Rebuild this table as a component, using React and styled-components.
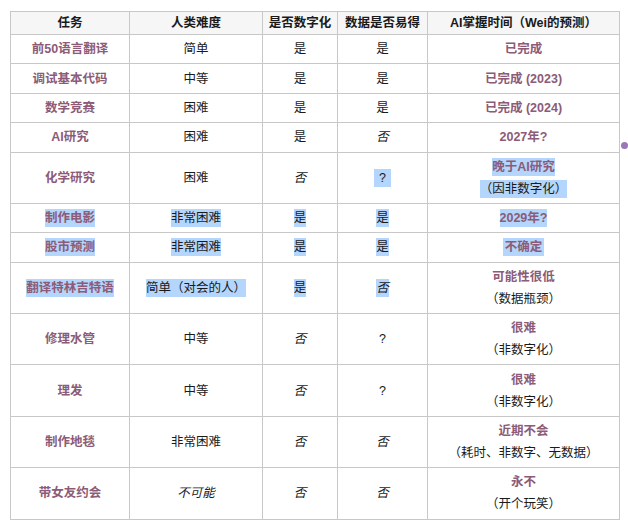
import React from "react";
import styled, { createGlobalStyle } from "styled-components";

const Global = createGlobalStyle`
  html, body { margin: 0; padding: 0; background: #ffffff; }
  body {
    font-family: "Liberation Sans", "Noto Sans CJK SC", sans-serif;
    font-size: 12.5px;
    color: #1a1a1a;
  }
`;

const Page = styled.div`
  position: relative;
  width: 628px;
  height: 531px;
  padding: 11px 0 0 10px;
  box-sizing: border-box;
`;

const Table = styled.table`
  border-collapse: collapse;
  table-layout: fixed;
  width: 609px;
`;

const Th = styled.th`
  border: 1px solid #c8c8c8;
  background: #f6f6f6;
  font-weight: 700;
  color: #1a1a1a;
  line-height: 16px;
  padding: 3px 4px;
  text-align: center;
  white-space: nowrap;
`;

const Td = styled.td`
  border: 1px solid #c8c8c8;
  text-align: center;
  vertical-align: middle;
  line-height: 22px;
  padding: 3.2px 4px;
  white-space: nowrap;
  color: ${(p) => (p.$task ? "#8c5b77" : "#1a1a1a")};
  font-weight: ${(p) => (p.$task ? 700 : 400)};
`;

const Line = styled.div`
  color: ${(p) => (p.$accent ? "#8c5b77" : "#1a1a1a")};
  font-weight: ${(p) => (p.$accent ? 700 : 400)};
`;

const Text = styled.span`
  font-style: ${(p) => (p.$italic ? "italic" : "normal")};
  background: ${(p) => (p.$sel ? "#b4d5fc" : "transparent")};
  padding: ${(p) => (p.$sel ? 2 : 0)}px ${(p) => p.$pad || 0}px;
`;

const Dot = styled.div`
  position: absolute;
  left: 621px;
  top: 142px;
  width: 7px;
  height: 7px;
  border-radius: 50%;
  background: #9a78b8;
`;

const cols = ["任务", "人类难度", "是否数字化", "数据是否易得", "AI掌握时间（Wei的预测）"];
const widths = [119, 133, 75, 90, 192];

const rows = [
  { t: "前50语言翻译", h: "简单", d: "是", e: "是", a: ["已完成"] },
  { t: "调试基本代码", h: "中等", d: "是", e: "是", a: ["已完成 (2023)"] },
  { t: "数学竞赛", h: "困难", d: "是", e: "是", a: ["已完成 (2024)"] },
  { t: "AI研究", h: "困难", d: "是", e: "否", a: ["2027年?"] },
  { t: "化学研究", h: "困难", d: "否", e: "?", a: ["晚于AI研究", "（因非数字化）"], sel: [0, 0, 0, 1, 1], epad: 5 },
  { t: "制作电影", h: "非常困难", d: "是", e: "是", a: ["2029年?"], sel: [1, 1, 1, 1, 1] },
  { t: "股市预测", h: "非常困难", d: "是", e: "是", a: ["不确定"], sel: [1, 1, 1, 1, 1], apad: 2 },
  { t: "翻译特林吉特语", h: "简单（对会的人）", d: "是", e: "否", a: ["可能性很低", "（数据瓶颈）"], sel: [1, 1, 1, 1, 0] },
  { t: "修理水管", h: "中等", d: "否", e: "?", a: ["很难", "（非数字化）"] },
  { t: "理发", h: "中等", d: "否", e: "?", a: ["很难", "（非数字化）"] },
  { t: "制作地毯", h: "非常困难", d: "否", e: "否", a: ["近期不会", "（耗时、非数字、无数据）"] },
  { t: "带女友约会", h: "不可能", d: "否", e: "否", a: ["永不", "（开个玩笑）"], hItalic: true },
];

export default function App() {
  return (
    <Page>
      <Global />
      <Table>
        <colgroup>
          {widths.map((w, i) => (
            <col key={i} style={{ width: w }} />
          ))}
        </colgroup>
        <thead>
          <tr>
            {cols.map((c) => (
              <Th key={c}>{c}</Th>
            ))}
          </tr>
        </thead>
        <tbody>
          {rows.map((r) => {
            const s = r.sel || [0, 0, 0, 0, 0];
            return (
              <tr key={r.t}>
                <Td $task>
                  <Text $sel={s[0]}>{r.t}</Text>
                </Td>
                <Td>
                  <Text $sel={s[1]} $italic={r.hItalic}>{r.h}</Text>
                </Td>
                <Td>
                  <Text $sel={s[2]} $italic={r.d === "否"}>{r.d}</Text>
                </Td>
                <Td>
                  <Text $sel={s[3]} $italic={r.e === "否"} $pad={r.epad}>{r.e}</Text>
                </Td>
                <Td>
                  {r.a.map((line, i) => (
                    <Line key={i} $accent={i === 0}>
                      <Text $sel={s[4]} $pad={r.apad}>{line}</Text>
                    </Line>
                  ))}
                </Td>
              </tr>
            );
          })}
        </tbody>
      </Table>
      <Dot />
    </Page>
  );
}
